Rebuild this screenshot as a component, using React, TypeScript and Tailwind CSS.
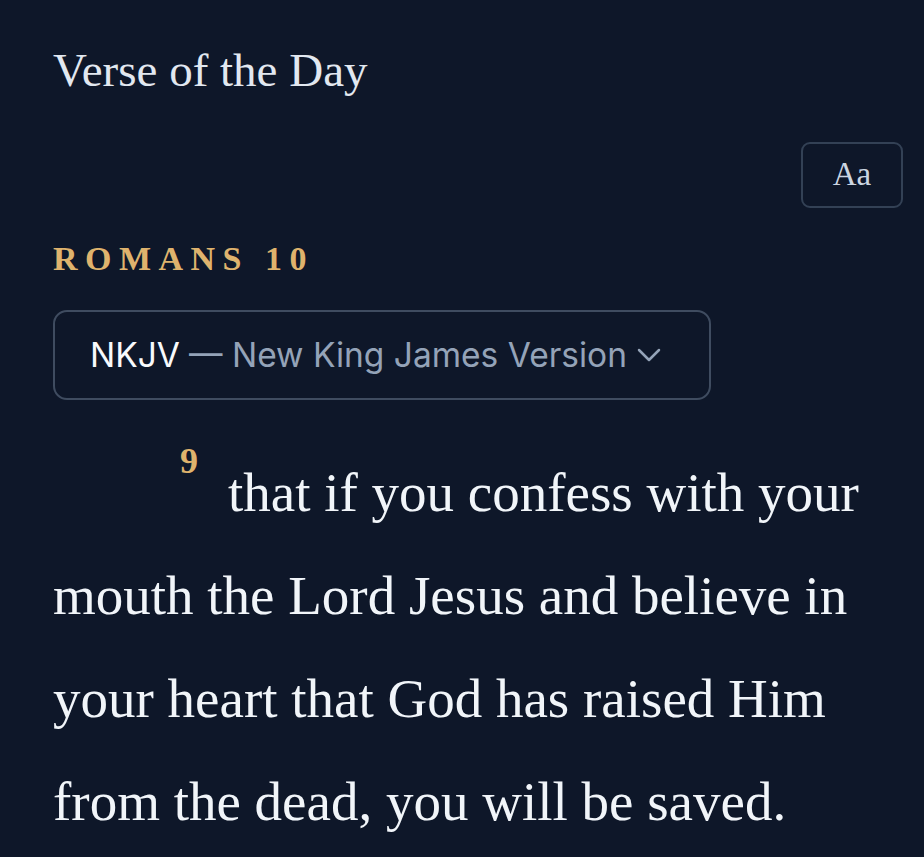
const serif = "font-['Liberation_Serif','Times_New_Roman',serif]";

function Chevron() {
  return (
    <svg width="24" height="14" viewBox="0 0 24 14" fill="none" className="ml-[10px] shrink-0">
      <polyline
        points="2,2 12,12 22,2"
        stroke="#94a3b8"
        strokeWidth="2.5"
        strokeLinecap="round"
        strokeLinejoin="round"
      />
    </svg>
  );
}

export default function App() {
  return (
    <div className="min-h-screen w-full bg-[#0e1729] pb-10">
      <div className="px-[53px] pt-[42px]">
        <h1 className={`${serif} text-[47px] leading-[56px] text-[#e2e8f0]`}>Verse of the Day</h1>
      </div>

      <div className="mt-[44px] flex justify-end pr-[21px]">
        <button
          className={`${serif} flex h-[66px] w-[102px] items-center justify-center rounded-[9px] border-2 border-[#334155] text-[33px] text-[#cbd5e1]`}
        >
          Aa
        </button>
      </div>

      <div className="px-[53px]">
        <div
          className={`${serif} mt-[31px] text-[34px] font-bold leading-[40px] tracking-[0.22em] text-[#dfb36d]`}
        >
          ROMANS 10
        </div>

        <div className="mt-[31px] flex h-[90px] w-[658px] items-center rounded-[14px] border-2 border-[#3f4c60] pl-[35px] font-['Inter',sans-serif] text-[33.5px]">
          <span className="text-[#f8fafc]">NKJV</span>
          <span className="ml-[9px] text-[#94a3b8]">— New King James Version</span>
          <Chevron />
        </div>

        <p className={`${serif} mt-[41px] text-[55px] leading-[103px] text-[#f1f5f9]`}>
          <span className="relative -top-[38px] ml-[127px] mr-[30px] inline-block text-[36px] font-bold leading-none text-[#dfb36d]">
            9
          </span>
          that if you confess with your mouth the Lord Jesus and believe in your heart that God has
          raised Him from the dead, you will be saved.
        </p>
      </div>
    </div>
  );
}
